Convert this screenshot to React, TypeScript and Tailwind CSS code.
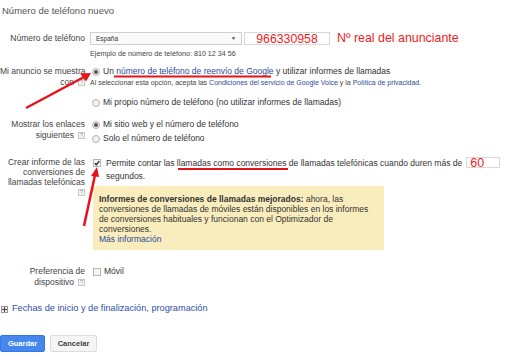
import React, { FC } from "react";

const font = { fontFamily: '"Liberation Sans", Arial, sans-serif' };

const Help: FC = () => (
  <span className="inline-flex items-center justify-center w-[7px] h-[7px] ml-[4px] border border-[#c8c8c8] bg-[#f4f4f4] text-[5.5px] leading-none text-[#999] align-middle">
    ?
  </span>
);

const Radio: FC<{ checked?: boolean }> = ({ checked }) => (
  <span className="inline-flex items-center justify-center w-[8px] h-[8px] rounded-full border border-[#b5b5b5] bg-[#f2f2f2] shrink-0">
    {checked && <span className="w-[4px] h-[4px] rounded-full bg-[#555]" />}
  </span>
);

const Check: FC<{ checked?: boolean }> = ({ checked }) => (
  <span className="inline-flex items-center justify-center w-[8px] h-[8px] border border-[#b5b5b5] bg-[#f4f4f4] shrink-0">
    {checked && (
      <svg width="6" height="6" viewBox="0 0 6 6">
        <path d="M0.8 3.2 L2.3 4.7 L5.3 1.2" stroke="#222" strokeWidth="1.3" fill="none" />
      </svg>
    )}
  </span>
);

const Row: FC<{ label: React.ReactNode; className?: string; children: React.ReactNode }> = ({
  label,
  className,
  children,
}) => (
  <div className={`flex ${className ?? ""}`}>
    <div className="w-[85px] shrink-0 text-right text-[8.5px] text-[#444] whitespace-nowrap">{label}</div>
    <div className="pl-[5px] text-[8.5px] text-[#333]">{children}</div>
  </div>
);

export default function App() {
  return (
    <div className="relative w-[510px] h-[363px] overflow-hidden bg-white" style={font}>
      {/* titulo */}
      <div className="h-[22px] pt-[5px] pl-[2px] text-[9.5px] leading-[12px] text-[#555]">
        Número de teléfono nuevo
      </div>

      {/* numero */}
      <Row className="mt-[10px]" label={<div className="leading-[13px]">Número de teléfono</div>}>
        <div className="flex items-center">
          <div className="flex items-center justify-between w-[152px] h-[13px] border border-[#d0d0d0] bg-[#fafafa] pl-[5px] pr-[5px] text-[6.5px] text-[#333]">
            <span>España</span>
            <span className="text-[5px] text-[#444]">▼</span>
          </div>
          <div className="ml-[2px] w-[86px] h-[13px] border border-[#d8d8d8] bg-white text-center text-[12.3px] leading-[12px] text-[#f01b1b]">
            966330958
          </div>
          <span className="ml-[7px] text-[12.4px] leading-[13px] text-[#f01b1b]">Nº real del anunciante</span>
        </div>
        <div className="mt-[4px] text-[7.2px] leading-[9px] text-[#444]">
          Ejemplo de número de teléfono: 810 12 34 56
        </div>
      </Row>

      {/* reenvio */}
      <Row
        className="mt-[8px]"
        label={
          <div className="leading-[11px]">
            Mi anuncio se muestra
            <br />
            con
            <Help />
          </div>
        }
      >
        <div className="flex items-center gap-[3px] leading-[11px] pl-[2px]">
          <Radio checked />
          <span>
            Un <span className="text-[#2a4b9b]">número de teléfono de reenvío de Google</span> y utilizar
            informes de llamadas
          </span>
        </div>
        <div className="mt-[1px] text-[7px] leading-[9px] text-[#444] whitespace-nowrap">
          Al seleccionar esta opción, acepta las{" "}
          <span className="text-[#2a4b9b]">Condiciones del servicio de Google Voice</span> y la{" "}
          <span className="text-[#2a4b9b]">Política de privacidad</span>.
        </div>
        <div className="mt-[10px] flex items-center gap-[3px] leading-[11px] pl-[2px]">
          <Radio />
          <span>Mi propio número de teléfono (no utilizar informes de llamadas)</span>
        </div>
      </Row>

      {/* enlaces */}
      <Row
        className="mt-[11px]"
        label={
          <div className="leading-[11px]">
            Mostrar los enlaces
            <br />
            siguientes
            <Help />
          </div>
        }
      >
        <div className="flex items-center gap-[3px] leading-[11px] pl-[2px]">
          <Radio checked />
          <span>Mi sitio web y el número de teléfono</span>
        </div>
        <div className="mt-[3px] flex items-center gap-[3px] leading-[11px] pl-[2px]">
          <Radio />
          <span>Solo el número de teléfono</span>
        </div>
      </Row>

      {/* conversiones */}
      <Row
        className="mt-[13px]"
        label={
          <div className="leading-[10px]">
            Crear informe de las
            <br />
            conversiones de
            <br />
            llamadas telefónicas
            <br />
            <Help />
          </div>
        }
      >
        <div className="flex items-center leading-[10px] pl-[3px]">
          <Check checked />
          <span className="ml-[5px] whitespace-nowrap">
            Permite contar las llamadas como conversiones de llamadas telefónicas cuando duren más de
          </span>
          <span className="ml-[4px] w-[34px] h-[11px] border border-[#d8d8d8] bg-white pl-[3px] text-[12.5px] leading-[10px] text-[#f01b1b]">
            60
          </span>
        </div>
        <div className="mt-[3px] pl-[16px] leading-[10px]">segundos.</div>
        <div className="mt-[5px] ml-[3px] w-[291px] h-[64px] bg-[#f9edbe] pt-[8px] pl-[6px] leading-[10px] text-[#333] whitespace-nowrap">
          <div>
            <b>Informes de conversiones de llamadas mejorados:</b> ahora, las
          </div>
          <div>conversiones de llamadas de móviles están disponibles en los informes</div>
          <div>de conversiones habituales y funcionan con el Optimizador de</div>
          <div>conversiones.</div>
          <div className="text-[#2a4b9b]">Más información</div>
        </div>
      </Row>

      {/* dispositivo */}
      <Row
        className="mt-[16px]"
        label={
          <div className="leading-[11px]">
            Preferencia de
            <br />
            dispositivo
            <Help />
          </div>
        }
      >
        <div className="flex items-center gap-[3px] leading-[11px] pl-[3px]">
          <Check />
          <span>Móvil</span>
        </div>
      </Row>

      {/* fechas */}
      <div className="mt-[15px] flex items-center h-[12px] pl-[1px] text-[9.2px] text-[#2d50a8]">
        <span className="relative flex items-center justify-center w-[7px] h-[7px] border border-[#999] bg-[#f0f0f0]">
          <span className="absolute w-[5px] h-px bg-[#444]" />
          <span className="absolute w-px h-[5px] bg-[#444]" />
        </span>
        <span className="ml-[4px]">Fechas de inicio y de finalización, programación</span>
      </div>

      {/* botones */}
      <div className="mt-[20px] flex gap-[5px]">
        <button className="w-[45px] h-[17px] rounded-[2px] border border-[#3079ed] bg-[#4787ed] text-[7.5px] font-bold text-white">
          Guardar
        </button>
        <button className="w-[47px] h-[17px] rounded-[2px] border border-[#dcdcdc] bg-[#f5f5f5] text-[7.5px] font-bold text-[#444]">
          Cancelar
        </button>
      </div>

      {/* anotaciones */}
      <svg className="absolute inset-0 pointer-events-none" width="510" height="363">
        <line x1="114" y1="76.5" x2="271" y2="76.5" stroke="#e8121a" strokeWidth="2" />
        <line x1="178" y1="169" x2="288" y2="169" stroke="#e8121a" strokeWidth="2" />
        <line x1="26" y1="108" x2="84" y2="77" stroke="#e8121a" strokeWidth="2.5" />
        <polygon points="91,73 80,73.5 86,81.5" fill="#e8121a" />
        <line x1="84" y1="226" x2="95" y2="175" stroke="#e8121a" strokeWidth="2.5" />
        <polygon points="97,167 91,176 99,177" fill="#e8121a" />
      </svg>
    </div>
  );
}
